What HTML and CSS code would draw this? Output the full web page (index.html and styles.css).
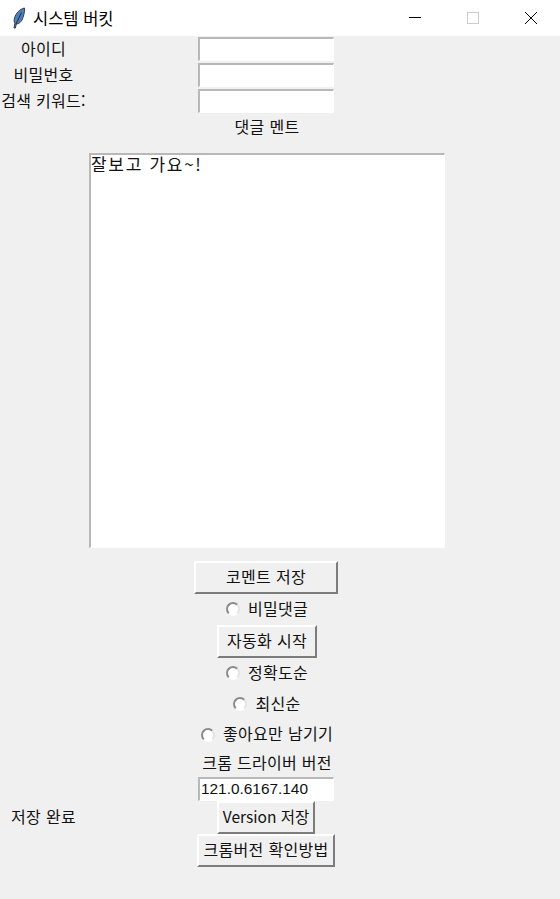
FILE: index.html
```html
<!DOCTYPE html>
<html lang="ko">
<head>
  <meta charset="UTF-8">
  <title>시스템 버킷</title>
  <link rel="stylesheet" href="styles.css">
</head>
<body>

  <header class="titlebar">
    <svg class="feather" width="14" height="22" viewBox="0 0 14 22">
      <path d="M12.500 1C8 2 4 6 2.500 11c-.5 2-.5 4 .3 5.500L2 21h1.400l.9-4c3 0 5.400-2.500 6.700-6.500C12 7 13 4 12.500 1z" fill="#4f7fbd" stroke="#333c48" stroke-width="1"/>
      <path d="M9.500 5.500 4 17" fill="none" stroke="#1d2a3a" stroke-width="1"/>
    </svg>
    <span class="app-name">시스템 버킷</span>
    <div class="win-buttons">
      <span class="win-btn"><svg width="12" height="12" viewBox="0 0 12 12"><path d="M0 5.500h12" stroke="#000"/></svg></span>
      <span class="win-btn"><svg width="12" height="12" viewBox="0 0 12 12"><rect x=".5" y=".5" width="11" height="11" fill="none" stroke="#ccc"/></svg></span>
      <span class="win-btn"><svg width="12" height="12" viewBox="0 0 12 12"><path d="M0 0l12 12M12 0L0 12" stroke="#000"/></svg></span>
    </div>
  </header>

  <main class="form">
    <label class="side">아이디</label>
    <input class="entry" type="text">

    <label class="side">비밀번호</label>
    <input class="entry" type="text">

    <label class="side">검색 키워드:</label>
    <input class="entry" type="text">

    <div class="mid">댓글 멘트</div>

    <textarea class="comment">잘보고 가요~!</textarea>

    <button class="btn btn-save">코멘트 저장</button>

    <div class="mid"><span class="radio"></span>비밀댓글</div>

    <button class="btn btn-start">자동화 시작</button>

    <div class="mid"><span class="radio"></span>정확도순</div>
    <div class="mid"><span class="radio"></span>최신순</div>
    <div class="mid"><span class="radio"></span>좋아요만 남기기</div>

    <div class="mid">크롬 드라이버 버전</div>
    <input class="entry" type="text" value="121.0.6167.140">

    <label class="side">저장 완료</label>
    <button class="btn btn-version">Version 저장</button>

    <button class="btn btn-howto">크롬버전 확인방법</button>
  </main>

</body>
</html>
```

FILE: styles.css
```css
body {
  margin: 0;
  height: 899px;
  overflow: hidden;
  background: #f0f0f0;
  color: #111;
  font-family: "Noto Sans CJK KR", "Liberation Sans", sans-serif;
  font-size: 16px;
  letter-spacing: .3px;
}

.titlebar {
  display: flex;
  align-items: center;
  height: 36px;
  background: #fff;
  padding-left: 12px;
}

.feather {
  margin-right: 7px;
}

.app-name {
  font-size: 16.500px;
  letter-spacing: 0;
  color: #000;
}

.win-buttons {
  display: flex;
  margin-left: auto;
}

.win-btn {
  display: flex;
  align-items: center;
  justify-content: center;
  width: 58px;
  height: 34px;
}

.form {
  display: grid;
  grid-template-columns: 88px 356px;
  grid-template-rows: 26px 26px 26px 26px 420px 34px 30px 34px 30px 32px 29px 28px 24px 33px 33px;
  justify-items: center;
  align-items: center;
}

.side {
  grid-column: 1;
  white-space: nowrap;
  padding: 0 1px 3px 0;
}

.mid, .entry, .comment, .btn {
  grid-column: 2;
}

.mid {
  display: flex;
  align-items: center;
  margin-left: 2px;
  padding-bottom: 3px;
}

.entry {
  box-sizing: border-box;
  width: 136px;
  height: 24px;
  padding: 0 1px 2px;
  border: 1px solid #fff;
  border-top: 2px solid #b8b8b8;
  border-left: 2px solid #b8b8b8;
  border-radius: 0;
  background: #fff;
  color: #111;
  font: 15.400px "Liberation Sans", sans-serif;
  letter-spacing: 0;
}

.comment {
  box-sizing: border-box;
  width: 356px;
  height: 395px;
  margin: 0 0 0 2px;
  padding: 0;
  resize: none;
  overflow: hidden;
  border: 1px solid #fff;
  border-top: 2px solid #b8b8b8;
  border-left: 2px solid #b8b8b8;
  border-radius: 0;
  background: #fff;
  color: #111;
  font: 17px/18px "Noto Sans CJK KR", sans-serif;
  letter-spacing: 1.700px;
}

.btn {
  box-sizing: border-box;
  height: 33px;
  padding: 0 0 3px;
  border: 2px solid;
  border-color: #fff #7c7c7c #7c7c7c #fff;
  border-radius: 0;
  background: #f0f0f0;
  color: #111;
  font: inherit;
  letter-spacing: inherit;
}

.btn-save { width: 144px; }
.btn-start { width: 100px; margin-left: 2px; }
.btn-version { width: 98px; font-size: 15.500px; letter-spacing: 0; }
.btn-howto { width: 138px; }

.radio {
  box-sizing: border-box;
  width: 14px;
  height: 14px;
  margin: 3px 8px 0 0;
  border: 2px solid;
  border-color: #8a8a8a #e4e4e4 #fff #8a8a8a;
  border-radius: 50%;
  background: #fff;
}
```
